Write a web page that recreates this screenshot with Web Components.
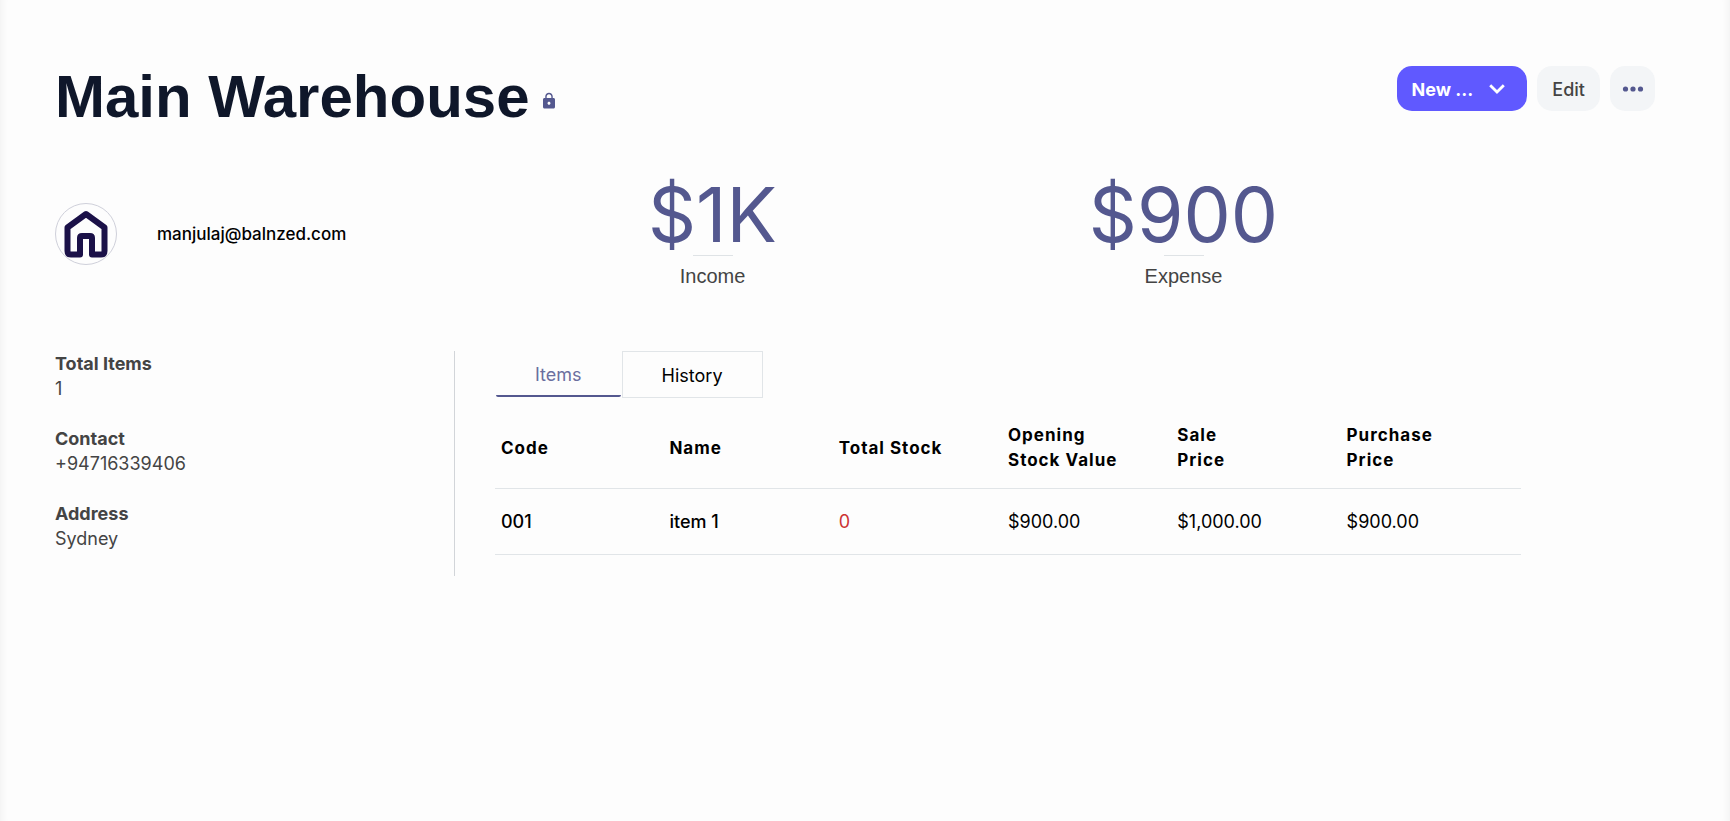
<!DOCTYPE html>
<html lang="en">
<head>
<meta charset="utf-8">
<meta name="viewport" content="width=device-width, initial-scale=1">
<title>Main Warehouse</title>
<style>
    html, body {
        margin: 0;
        min-height: 100%;
    }

    body {
        background: #fdfdfd;
        color: #000;
        font-family: Inter, "Liberation Sans", sans-serif;
        font-size: 18px;
        line-height: 25px;
    }
</style>
</head>
<body>

<warehouse-page>
    <page-header slot="header" heading="Main Warehouse">
        <action-button variant="primary" menu>New ...</action-button>
        <action-button>Edit</action-button>
        <action-button variant="icon"></action-button>
    </page-header>

    <contact-badge slot="summary" email="manjulaj@balnzed.com"></contact-badge>
    <stat-figure slot="summary" label="Income">$1K</stat-figure>
    <stat-figure slot="summary" label="Expense">$900</stat-figure>

    <detail-field slot="details" label="Total Items">1</detail-field>
    <detail-field slot="details" label="Contact">+94716339406</detail-field>
    <detail-field slot="details" label="Address">Sydney</detail-field>

    <tab-bar slot="content" tabs="Items,History"></tab-bar>
    <items-table slot="content"></items-table>
</warehouse-page>

<script>
class WarehousePage extends HTMLElement {
    connectedCallback() {
        this.attachShadow({ mode: 'open' });
        this.shadowRoot.innerHTML = `
            <style>
                :host {
                    display: block;
                    box-sizing: border-box;
                    min-height: 100vh;
                    padding: 60px 75px 40px 55px;
                    box-shadow: inset 9px 0 8px -8px rgba(0, 0, 0, 0.06), inset -9px 0 8px -8px rgba(0, 0, 0, 0.06);
                }

                .summary {
                    display: grid;
                    grid-template-columns: 422fr 471fr 471fr 236fr;
                    align-items: center;
                    margin-top: 40px;
                }

                .body {
                    display: grid;
                    grid-template-columns: 25% 1fr;
                    margin-top: 57px;
                }

                aside {
                    display: flex;
                    flex-direction: column;
                    gap: 25px;
                    padding-bottom: 25px;
                    border-right: 1px solid #d2d5d9;
                }

                main {
                    padding-left: 40px;
                    padding-right: 134px;
                }
            </style>

            <slot name="header"></slot>
            <section class="summary"><slot name="summary"></slot></section>
            <div class="body">
                <aside><slot name="details"></slot></aside>
                <main><slot name="content"></slot></main>
            </div>
        `;
    }
}

class PageHeader extends HTMLElement {
    connectedCallback() {
        this.attachShadow({ mode: 'open' });
        this.shadowRoot.innerHTML = `
            <style>
                :host {
                    display: flex;
                    justify-content: space-between;
                    align-items: flex-start;
                }

                .title {
                    display: flex;
                    align-items: center;
                    gap: 10px;
                }

                h1 {
                    margin: 0;
                    color: #0f172a;
                    font: bold 60px/74px "Liberation Sans", Arial, sans-serif;
                }

                svg {
                    margin-top: 8px;
                    fill: #54588f;
                }

                .actions {
                    display: flex;
                    gap: 10px;
                    padding-top: 6px;
                }
            </style>

            <div class="title">
                <h1>${this.getAttribute('heading')}</h1>
                <svg width="18" height="18" viewBox="0 0 24 24" aria-hidden="true">
                    <path d="M18 8h-1V6c0-2.76-2.24-5-5-5S7 3.24 7 6v2H6c-1.1 0-2 .9-2 2v10c0 1.1.9 2 2 2h12c1.1 0 2-.9 2-2V10c0-1.1-.9-2-2-2zm-6 9c-1.1 0-2-.9-2-2s.9-2 2-2 2 .9 2 2-.9 2-2 2zm3.1-9H8.9V6c0-1.71 1.39-3.1 3.1-3.1s3.1 1.39 3.1 3.1v2z"/>
                </svg>
            </div>
            <div class="actions"><slot></slot></div>
        `;
    }
}

class ActionButton extends HTMLElement {
    connectedCallback() {
        const variant = this.getAttribute('variant') || 'plain';
        const chevron = `
            <svg width="16" height="10" viewBox="0 0 16 10" fill="none" stroke="currentColor" stroke-width="2.8" aria-hidden="true">
                <path d="M1.2 1.2 8 8l6.8-6.8"/>
            </svg>`;
        const dots = `
            <svg width="22" height="6" viewBox="0 0 22 6" fill="#54588f" aria-hidden="true">
                <circle cx="3.5" cy="3" r="2.6"/><circle cx="11" cy="3" r="2.6"/><circle cx="18.5" cy="3" r="2.6"/>
            </svg>`;

        this.attachShadow({ mode: 'open' });
        this.shadowRoot.innerHTML = `
            <style>
                :host {
                    display: block;
                }

                button {
                    display: flex;
                    align-items: center;
                    justify-content: center;
                    gap: 16px;
                    height: 45px;
                    padding: 1px 15px 0;
                    border: 0;
                    border-radius: 15px;
                    background: #f3f5f7;
                    color: #444;
                    font: 500 18px/25px Inter, sans-serif;
                    cursor: pointer;
                }

                .primary {
                    padding-right: 22px;
                    background: #6059ff;
                    color: #fff;
                    font-weight: 700;
                }

                .icon {
                    width: 45px;
                    padding: 0;
                }
            </style>

            <button type="button" class="${variant}" ${variant === 'icon' ? 'aria-label="More"' : ''}>
                ${variant === 'icon' ? dots : '<slot></slot>'}
                ${this.hasAttribute('menu') ? chevron : ''}
            </button>
        `;
    }
}

class ContactBadge extends HTMLElement {
    connectedCallback() {
        const email = this.getAttribute('email');

        this.attachShadow({ mode: 'open' });
        this.shadowRoot.innerHTML = `
            <style>
                :host {
                    display: flex;
                    align-items: center;
                    gap: 40px;
                }

                .avatar {
                    display: grid;
                    place-items: center;
                    width: 60px;
                    height: 60px;
                    border: 1px solid #cfd0da;
                    border-radius: 50%;
                }

                a {
                    color: #000;
                    font-size: 17px;
                    font-weight: 500;
                    text-decoration: none;
                }
            </style>

            <div class="avatar">
                <svg width="44" height="48" viewBox="0 0 44 48" fill="none" stroke="#1b1148" stroke-width="6" stroke-linejoin="round" aria-hidden="true">
                    <path d="M22 4 3.5 17.5V41q0 3.5 3.5 3.5h9V28q0-2 2-2h8q2 0 2 2v16.5h9q3.5 0 3.5-3.5V17.5z"/>
                </svg>
            </div>
            <a href="mailto:${email}">${email}</a>
        `;
    }
}

class StatFigure extends HTMLElement {
    connectedCallback() {
        this.attachShadow({ mode: 'open' });
        this.shadowRoot.innerHTML = `
            <style>
                :host {
                    display: flex;
                    flex-direction: column;
                    align-items: center;
                    padding-bottom: 5px;
                }

                .value {
                    color: #54588f;
                    font-size: 75px;
                    line-height: 81px;
                }

                hr {
                    width: 40px;
                    margin: 0 0 8px;
                    border: 0;
                    border-top: 1px solid #dfe3e6;
                }

                .label {
                    color: #444;
                    font: 20px/25px "Liberation Sans", Arial, sans-serif;
                }
            </style>

            <div class="value"><slot></slot></div>
            <hr>
            <div class="label">${this.getAttribute('label')}</div>
        `;
    }
}

class DetailField extends HTMLElement {
    connectedCallback() {
        this.attachShadow({ mode: 'open' });
        this.shadowRoot.innerHTML = `
            <style>
                :host {
                    display: block;
                    color: #444;
                }

                .label {
                    font-weight: 700;
                }
            </style>

            <div class="label">${this.getAttribute('label')}</div>
            <div><slot></slot></div>
        `;
    }
}

class TabBar extends HTMLElement {
    connectedCallback() {
        const tabs = this.getAttribute('tabs').split(',');

        this.attachShadow({ mode: 'open' });
        this.shadowRoot.innerHTML = `
            <style>
                :host {
                    display: flex;
                    gap: 1px;
                    margin-bottom: 11px;
                    padding-left: 1px;
                }

                button {
                    height: 47px;
                    padding: 2px 39px 0;
                    border: 1px solid #e1e5e8;
                    background: none;
                    color: #000;
                    font: 18px/25px Inter, sans-serif;
                    cursor: pointer;
                }

                button[aria-selected="true"] {
                    height: 46px;
                    border: 0;
                    border-bottom: 2px solid #54588f;
                    border-radius: 2px;
                    padding-top: 3px;
                    color: #6b6f9f;
                }
            </style>

            ${tabs.map((tab, i) => `<button type="button" role="tab" aria-selected="${i === 0}">${tab}</button>`).join('')}
        `;

        // move the selection to the clicked tab
        const buttons = this.shadowRoot.querySelectorAll('button');
        buttons.forEach((btn) => {
            btn.addEventListener('click', () => {
                buttons.forEach((b) => b.setAttribute('aria-selected', b === btn));
            });
        });
        this.setAttribute('role', 'tablist');
    }
}

class ItemsTable extends HTMLElement {
    connectedCallback() {
        const items = [
            { code: '001', name: 'item 1', stock: 0, opening: '$900.00', sale: '$1,000.00', purchase: '$900.00' }
        ];

        this.attachShadow({ mode: 'open' });
        this.shadowRoot.innerHTML = `
            <style>
                :host {
                    display: block;
                }

                table {
                    width: 100%;
                    border-collapse: collapse;
                    table-layout: fixed;
                }

                th, td {
                    padding: 20px 0;
                    border-bottom: 1px solid #e1e5e8;
                    text-align: left;
                    font-size: 18px;
                    font-weight: 400;
                }

                th {
                    padding: 14px 0 15px;
                    font-size: 17px;
                    font-weight: 700;
                    letter-spacing: 1px;
                }

                th:first-child, td:first-child {
                    padding-left: 6px;
                    box-sizing: border-box;
                }

                th:first-child, th:last-child {
                    width: 17%;
                }

                .strong {
                    font-weight: 500;
                }

                .low {
                    color: #cc3333;
                }
            </style>

            <table>
                <thead>
                    <tr>
                        <th>Code</th>
                        <th>Name</th>
                        <th>Total Stock</th>
                        <th>Opening<br>Stock Value</th>
                        <th>Sale<br>Price</th>
                        <th>Purchase<br>Price</th>
                    </tr>
                </thead>
                <tbody>
                    ${items.map((item) => `
                        <tr>
                            <td class="strong">${item.code}</td>
                            <td class="strong">${item.name}</td>
                            <td class="${item.stock > 0 ? '' : 'low'}">${item.stock}</td>
                            <td>${item.opening}</td>
                            <td>${item.sale}</td>
                            <td>${item.purchase}</td>
                        </tr>
                    `).join('')}
                </tbody>
            </table>
        `;
    }
}

customElements.define('warehouse-page', WarehousePage);
customElements.define('page-header', PageHeader);
customElements.define('action-button', ActionButton);
customElements.define('contact-badge', ContactBadge);
customElements.define('stat-figure', StatFigure);
customElements.define('detail-field', DetailField);
customElements.define('tab-bar', TabBar);
customElements.define('items-table', ItemsTable);
</script>
</body>
</html>
